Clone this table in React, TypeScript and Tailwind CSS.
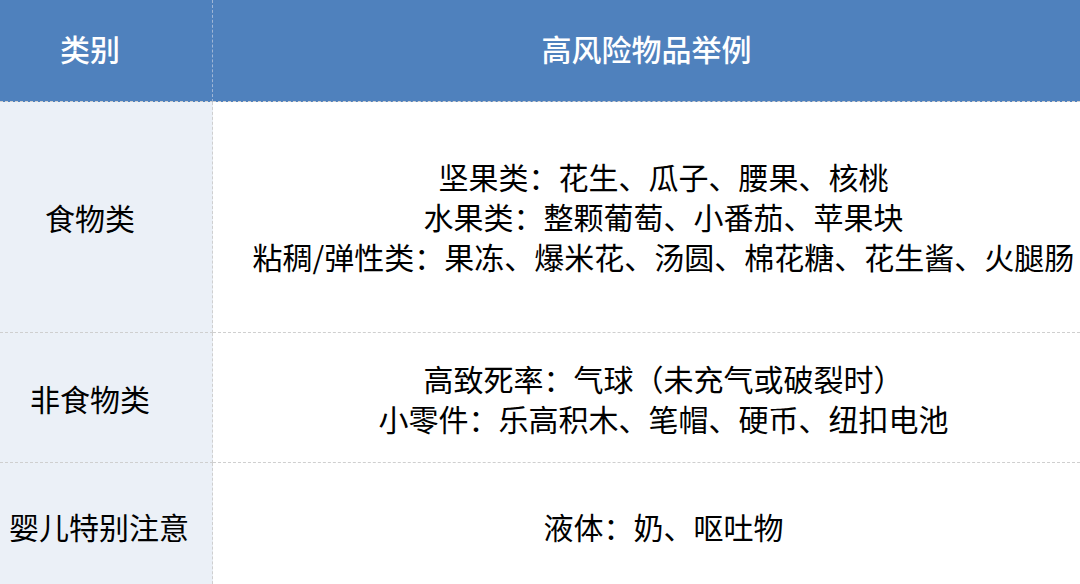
import React from "react";

const font = { fontFamily: '"Noto Sans CJK SC", "Noto Sans", sans-serif' };

export default function App() {
  return (
    <div
      className="w-[1080px] h-[584px] overflow-hidden bg-white text-black"
      style={font}
    >
      <div className="grid grid-cols-[213px_1fr]">
        {/* Header */}
        <div className="h-[102px] bg-[#4f81bd] border-b border-r border-dashed border-b-[#d0d0d0] border-r-[#9fb6d6] flex items-center justify-center pr-[32px] pb-[6px] text-white text-[30px] font-medium leading-none">
          类别
        </div>
        <div className="h-[102px] bg-[#4f81bd] border-b border-dashed border-[#d0d0d0] flex items-center justify-center pb-[6px] text-white text-[30px] font-medium leading-none">
          高风险物品举例
        </div>

        {/* Row 1 */}
        <div className="h-[231px] bg-[#ebf0f7] border-b border-r border-dashed border-[#cfcfcf] flex items-center justify-center pr-[32px] text-[30px] leading-[40px]">
          食物类
        </div>
        <div className="h-[231px] border-b border-dashed border-[#cfcfcf] flex flex-col items-center justify-center pl-[34px] pb-[2px] text-[30px] leading-[40px] text-center">
          <div>坚果类：花生、瓜子、腰果、核桃</div>
          <div>水果类：整颗葡萄、小番茄、苹果块</div>
          <div className="whitespace-nowrap">
            粘稠/弹性类：果冻、爆米花、汤圆、棉花糖、花生酱、火腿肠
          </div>
        </div>

        {/* Row 2 */}
        <div className="h-[130px] bg-[#ebf0f7] border-b border-r border-dashed border-[#cfcfcf] flex items-center justify-center pr-[32px] text-[30px] leading-[40px]">
          非食物类
        </div>
        <div className="h-[130px] border-b border-dashed border-[#cfcfcf] flex flex-col items-center justify-center pl-[34px] text-[30px] leading-[40px] text-center">
          <div>高致死率：气球（未充气或破裂时）</div>
          <div>小零件：乐高积木、笔帽、硬币、纽扣电池</div>
        </div>

        {/* Row 3 */}
        <div className="h-[126px] bg-[#ebf0f7] border-r border-dashed border-[#cfcfcf] flex items-center pl-[9px] text-[30px] leading-[40px] whitespace-nowrap">
          婴儿特别注意
        </div>
        <div className="h-[126px] flex items-center justify-center pl-[34px] text-[30px] leading-[40px]">
          液体：奶、呕吐物
        </div>
      </div>
    </div>
  );
}
